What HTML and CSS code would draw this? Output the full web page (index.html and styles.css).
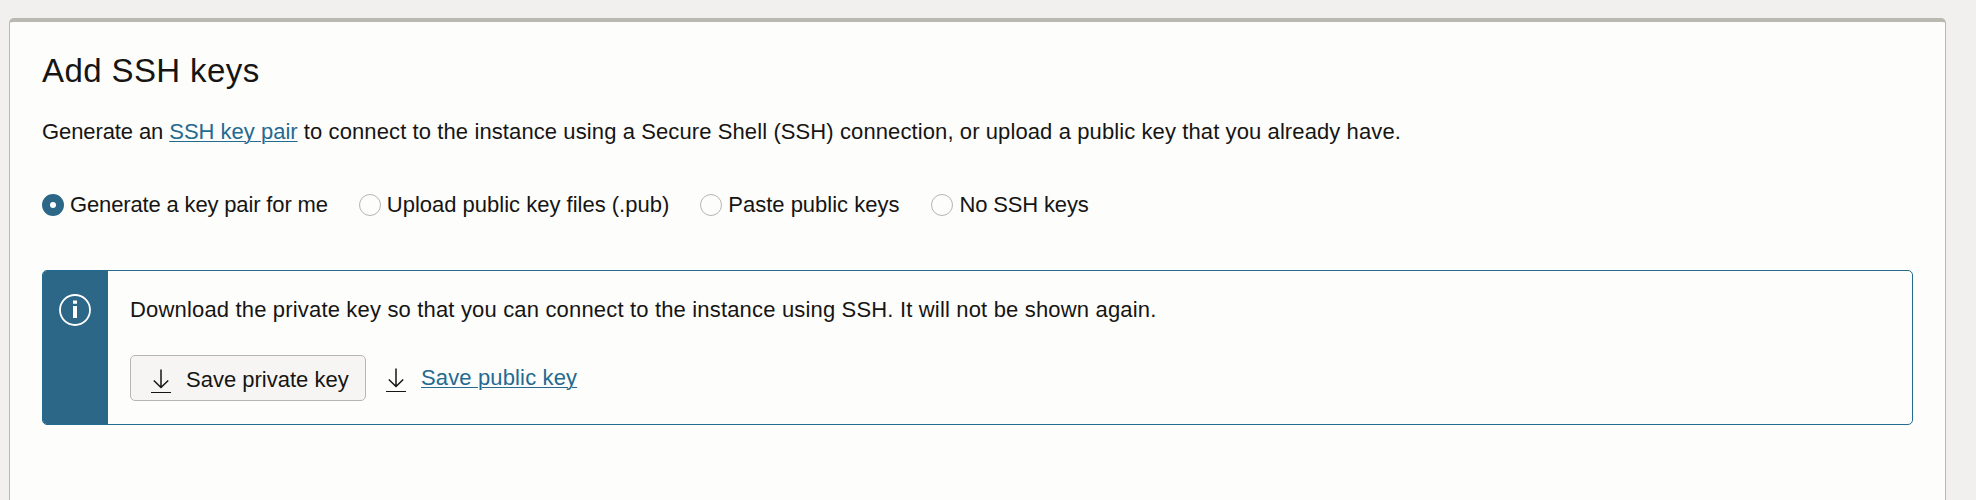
FILE: index.html
```html
<!DOCTYPE html>
<html lang="en">
<head>
<meta charset="utf-8">
<title>Add SSH keys</title>
<link rel="stylesheet" href="styles.css">
</head>
<body>
<main class="panel">
  <h1 class="title">Add SSH keys</h1>
  <p class="intro"><span class="intro-lead">Generate an </span><a class="link" href="#">SSH key pair</a> to connect to the instance using a Secure Shell (SSH) connection, or upload a public key that you already have.</p>
  <div class="options">
    <label class="option option-generate"><input class="radio" type="radio" name="ssh" checked><span>Generate a key pair for me</span></label>
    <label class="option option-upload"><input class="radio" type="radio" name="ssh"><span>Upload public key files (.pub)</span></label>
    <label class="option option-paste"><input class="radio" type="radio" name="ssh"><span>Paste public keys</span></label>
    <label class="option option-none"><input class="radio" type="radio" name="ssh"><span>No SSH keys</span></label>
  </div>
  <section class="notice">
    <div class="notice-side">
      <svg width="32" height="32" viewBox="0 0 32 32"><circle cx="16" cy="16" r="15" fill="none" stroke="#fff" stroke-width="1.8"/><path d="M14 6.5h4v3.2h-4zM14 12h4v12h-4z" fill="#fff"/></svg>
    </div>
    <div class="notice-body">
      <p class="message">Download the private key so that you can connect to the instance using SSH. It will not be shown again.</p>
      <div class="actions">
        <button class="button" type="button"><svg class="icon" width="20" height="24" viewBox="0 0 20 24"><path d="M10 .5V18M2.8 11.5 10 18.5 17.2 11.5" fill="none" stroke="#161513" stroke-width="1.5"/><path d="M0 23.5h20" stroke="#161513"/></svg><span>Save private key</span></button>
        <a class="save-link" href="#"><svg class="icon" width="20" height="24" viewBox="0 0 20 24"><path d="M10 .5V18M2.8 11.5 10 18.5 17.2 11.5" fill="none" stroke="#161513" stroke-width="1.5"/><path d="M0 23.5h20" stroke="#161513"/></svg><span class="link">Save public key</span></a>
      </div>
    </div>
  </section>
</main>
</body>
</html>
```
FILE: styles.css
```css
* { box-sizing: border-box; }
body {
  margin: 0;
  height: 500px;
  padding: 18px 30px 0 9px;
  background: #f2f0ef;
  color: #161513;
  font: 22px/30px "Liberation Sans", Arial, sans-serif;
}
.panel {
  height: 482px;
  padding: 30px 32px 0;
  background: #fdfdfb;
  border: 1px solid #b9b7b3;
  border-top: 4px solid #b9b8b1;
  border-bottom: 0;
  border-radius: 5px 5px 0 0;
}
.title {
  margin: 0;
  font-size: 33px;
  line-height: 38px;
  font-weight: 400;
  letter-spacing: 0.4px;
}
.intro {
  margin: 27px 0 0;
  white-space: nowrap;
  letter-spacing: 0.1px;
}
.intro-lead { letter-spacing: -0.1px; }
.link {
  color: #246a91;
  letter-spacing: 0;
  text-decoration: underline;
  text-decoration-thickness: 1px;
  text-underline-offset: 2px;
}
.options { display: flex; margin-top: 43px; gap: 31px; height: 30px; }
.option { display: flex; align-items: center; gap: 6px; white-space: nowrap; }
.option-generate, .option-none { letter-spacing: -0.15px; }
.option-paste { margin-right: 1px; }
.radio {
  appearance: none;
  flex: none;
  width: 22px;
  height: 22px;
  margin: 0;
  background: #fdfdfb;
  border: 1px solid #b7b5b2;
  border-radius: 50%;
}
.radio:checked { border: 8px solid #2c6788; background: #fff; }
.notice {
  display: flex;
  height: 155px;
  margin-top: 50px;
  border: 1px solid #246a91;
  border-radius: 5px;
  overflow: hidden;
}
.notice-side {
  width: 65px;
  padding: 23px 0 0 16px;
  background: #2c6788;
}
.notice-body { padding: 24px 22px 0; }
.message { margin: 0; white-space: nowrap; letter-spacing: 0.17px; }
.actions { display: flex; margin-top: 30px; gap: 20px; }
.button {
  display: flex;
  align-items: center;
  gap: 15px;
  width: 236px;
  height: 46px;
  padding: 3px 20px 0;
  background: #f7f5f4;
  border: 1px solid #b7b5b2;
  border-radius: 5px;
  color: inherit;
  font: inherit;
  white-space: nowrap;
}
.icon { flex: none; }
.button .icon { margin-top: 3px; }
.save-link {
  display: flex;
  align-items: center;
  height: 46px;
  gap: 15px;
  color: inherit;
  text-decoration: none;
  white-space: nowrap;
}
.save-link .icon { margin-top: 4px; }
.save-link .link { letter-spacing: 0.14px; }
```
